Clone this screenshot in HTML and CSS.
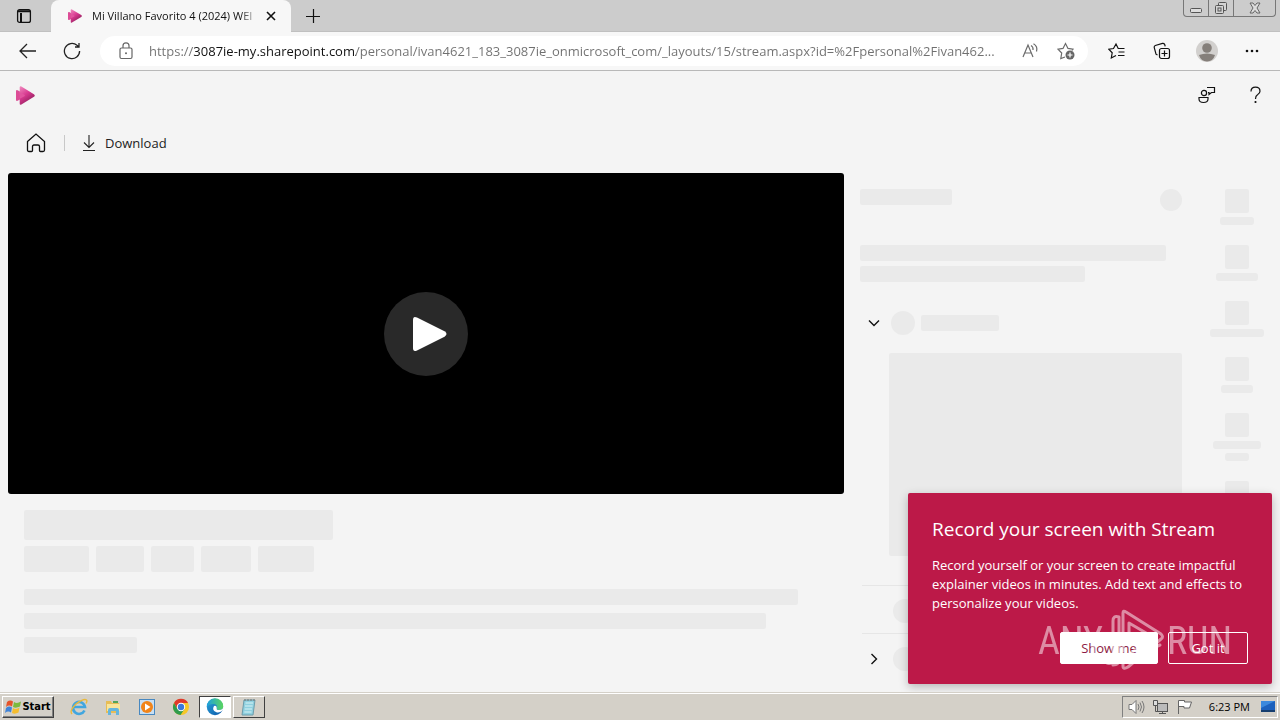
FILE: index.html
```html
<!DOCTYPE html>
<html lang="en">
<head>
<meta charset="utf-8">
<meta name="viewport" content="width=device-width, initial-scale=1">
<title>Mi Villano Favorito 4 (2024)</title>
<link rel="stylesheet" href="styles.css">
</head>
<body>
<svg class="defs" aria-hidden="true">
  <defs>
    <linearGradient id="pink" x1="0" y1="0" x2="0.6" y2="1"><stop offset="0" stop-color="#f08cc0"/><stop offset="0.5" stop-color="#d83a90"/><stop offset="1" stop-color="#8c1d58"/></linearGradient>
    <linearGradient id="edge" x1="0" y1="0" x2="1" y2="1"><stop offset="0" stop-color="#2ba5d9"/><stop offset="1" stop-color="#0b56a8"/></linearGradient>
    <linearGradient id="edgetop" x1="0" y1="0" x2="1" y2="0"><stop offset="0" stop-color="#1d9fe0"/><stop offset="1" stop-color="#5bd65c"/></linearGradient>
    <symbol id="stream" viewBox="0 0 18 18"><path d="M0 5Q0 3.500 1.500 4L9 8Q10.500 9 9 10L1.500 14Q0 14.500 0 13Z" fill="#dc4c96"/><path d="M3.500 1.500Q3.500-.3 5.100 .500L17 7.700Q18.600 9 17 10.300L5.100 17.500Q3.500 18.300 3.500 16.500Z" fill="url(#pink)"/><path d="M3.500 6L8 8.300Q9 9 8 9.700L3.500 12Z" fill="#e0559f"/></symbol>
  </defs>
</svg>

<header class="tabstrip">
  <button class="tab-actions" aria-label="Tab actions"><svg width="16" height="16" viewBox="0 0 16 16" fill="none" stroke="#111" stroke-width="1.300"><rect x="1.600" y="1.600" width="12.800" height="12.800" rx="2"/><path d="M2 3.200H14M5 5V14" stroke-width="2"/></svg></button>
  <div class="tab">
    <svg width="14" height="14"><use href="#stream"/></svg>
    <span class="tab-title">Mi Villano Favorito 4 (2024) WEI</span>
    <button class="tab-close" aria-label="Close tab"><svg width="10" height="10" viewBox="0 0 10 10" stroke="#111" stroke-width="1.600"><path d="M1 1L9 9M9 1L1 9"/></svg></button>
  </div>
  <button class="new-tab" aria-label="New tab"><svg width="14" height="14" viewBox="0 0 14 14" stroke="#111" stroke-width="1.200"><path d="M0 7.500H14M7.500 0V14"/></svg></button>
  <div class="window-buttons">
    <button class="win" aria-label="Minimize"><svg width="12" height="14" viewBox="0 0 12 14" fill="#ddd" stroke="#555"><rect x=".5" y="7.500" width="11" height="4" rx="1"/></svg></button>
    <button class="win" aria-label="Restore"><svg width="14" height="14" viewBox="0 0 14 14" fill="#d4d4d4" stroke="#555"><rect x="4.500" y="1.500" width="8" height="8" rx="1"/><rect x="1.500" y="4.500" width="8" height="8" rx="1"/><rect x="4" y="7" width="3" height="3"/></svg></button>
    <button class="win wide" aria-label="Close"><svg width="12" height="12" viewBox="0 0 12 12" fill="#ddd" stroke="#666"><path d="M1 1H4L6 3.500L8 1H11L8 6L11 11H8L6 8.500L4 11H1L4 6Z"/></svg></button>
  </div>
</header>

<nav class="toolbar" aria-label="Browser">
  <button class="tool" aria-label="Back"><svg width="18" height="16" viewBox="0 0 18 16" fill="none" stroke="#222" stroke-width="1.300"><path d="M8 1L1 8L8 15M1 8H17"/></svg></button>
  <button class="tool" aria-label="Refresh"><svg width="18" height="18" viewBox="0 0 18 18" fill="none" stroke="#222" stroke-width="1.300"><path d="M16.600 9A7.600 7.600 0 1 1 14 3.300L15.500 4.500M16 1V5H12"/></svg></button>
  <div class="address">
    <svg width="14" height="18" viewBox="0 0 14 18" fill="none" stroke="#666" stroke-width="1.200"><rect x="1" y="6" width="12" height="10.500" rx="1.500"/><path d="M4 6V3.800A3 3 0 0 1 10 3.800V6"/><circle cx="7" cy="11.300" r="1" fill="#666" stroke="none"/></svg>
    <input class="url" type="text" aria-label="Address" value="https://3087ie-my.sharepoint.com/personal/ivan4621_183_3087ie_onmicrosoft_com/_layouts/15/stream.aspx?id=%2Fpersonal%2Fivan462...">
    <button class="addr-btn" aria-label="Read aloud"><svg width="17" height="16" viewBox="0 0 17 16" fill="none" stroke="#6b6b6b" stroke-width="1.200"><path d="M1 14L6 2L11 14M2.800 10H9.200M9 2.500Q11.500 4 11 7M11.500 .8Q16 3.500 14.500 8.500"/></svg></button>
    <button class="addr-btn" aria-label="Add to favorites"><svg width="18" height="18" viewBox="0 0 18 18" fill="none" stroke="#6b6b6b" stroke-width="1.200"><path d="M8 15L3.800 16.500L4.700 11L1 7.200L6 6.400L8.500 1.500L11 6.400L16 7.200L15 8.500"/><circle cx="13" cy="13" r="4.500" fill="#666" stroke="none"/><path d="M10.500 13H15.500M13 10.500V15.500" stroke="#fff"/></svg></button>
  </div>
  <div class="tools-end">
    <button class="tool" aria-label="Favorites"><svg width="18" height="18" viewBox="0 0 18 18" fill="none" stroke="#111" stroke-width="1.200"><path d="M8 13.500L3.300 16L4.200 10.800L.8 7.200L5.500 6.500L8 2L10.200 6.500H16.500M10.500 10H16.500M10 13.500H16.500"/></svg></button>
    <button class="tool" aria-label="Collections"><svg width="18" height="18" viewBox="0 0 18 18" fill="none" stroke="#111" stroke-width="1.200"><rect x="6.500" y="6.500" width="10" height="10" rx="2"/><path d="M11.500 8.500V14.500M8.500 11.500H14.500M4.500 13L3 12.200L1.200 5.500Q1 4 2.300 3.500L9.500 1.400Q11 1.200 11.700 2.500L12.200 4.300"/></svg></button>
    <button class="tool" aria-label="Profile"><svg width="22" height="22" viewBox="0 0 22 22"><circle cx="11" cy="11" r="11" fill="#d2d0ce"/><circle cx="11" cy="8" r="4.800" fill="#857f7a"/><path d="M3 15Q11 12 19 15Q17 21.500 11 21.500Q5 21.500 3 15Z" fill="#857f7a"/></svg></button>
    <button class="tool" aria-label="Settings and more"><svg width="14" height="4" viewBox="0 0 14 4" fill="#111"><circle cx="2" cy="2" r="1.300"/><circle cx="7" cy="2" r="1.300"/><circle cx="12" cy="2" r="1.300"/></svg></button>
  </div>
</nav>

<div class="app">
  <header class="suite">
    <svg width="19" height="19"><use href="#stream"/></svg>
    <div class="suite-actions">
      <button class="tool" aria-label="Feedback"><svg width="18" height="18" viewBox="0 0 18 18" fill="none" stroke="#111" stroke-width="1.200"><circle cx="6" cy="7" r="2.600"/><path d="M1 11.500H10V13Q10 16.500 5.500 16.500Q1 16.500 1 13ZM9 1.500H16.500V6.500H13.500L11 8.500V6.500H10"/></svg></button>
      <button class="tool" aria-label="Help"><svg width="11" height="18" viewBox="0 0 11 18" fill="none" stroke="#111" stroke-width="1.200"><path d="M1 5.500Q1 1.200 5.500 1.200Q10 1.200 10 5.200Q10 7.200 7.500 8.800Q5.500 10 5.500 13"/><circle cx="5.500" cy="16" r=".5" fill="#111"/></svg></button>
    </div>
  </header>

  <nav class="commands" aria-label="Commands">
    <button class="home" aria-label="Home"><svg width="20" height="20" viewBox="0 0 20 20" fill="none" stroke="#111" stroke-width="1.300"><path d="M1.500 8.500L10 1L18.500 8.500V17Q18.500 18.500 17 18.500H14.500Q13.500 18.500 13.500 17.500V13.500Q13.500 12 12 12H8Q6.500 12 6.500 13.500V17.500Q6.500 18.500 5.500 18.500H3Q1.500 18.500 1.500 17Z"/></svg></button>
    <span class="separator"></span>
    <button class="download"><svg width="14" height="18" viewBox="0 0 14 18" fill="none" stroke="#222" stroke-width="1.100"><path d="M7 1V13.500M2 8.500L7 13.500L12 8.500M1 16.500H13"/></svg>Download</button>
  </nav>

  <main class="content">
    <section class="watch">
      <div class="video"><button class="play" aria-label="Play"><svg width="36" height="38" viewBox="0 0 36 38"><path d="M1 5Q1 .8 5 2.600L32.500 16.300Q36.500 19 32.500 21.700L5 35.400Q1 37.200 1 33Z" fill="#fff"/></svg></button></div>
      <div class="details">
        <div class="bone headline"></div>
        <div class="chips"><i class="bone chip-a"></i><i class="bone chip-b"></i><i class="bone chip-c"></i><i class="bone chip-d"></i><i class="bone chip-e"></i></div>
        <div class="bone line full"></div>
        <div class="bone line long"></div>
        <div class="bone line short"></div>
      </div>
    </section>

    <aside class="panel">
      <div class="panel-head"><i class="bone panel-title"></i><i class="bone dot"></i></div>
      <div class="bone text-a"></div>
      <div class="bone text-b"></div>
      <div class="group open">
        <button class="chevron" aria-label="Collapse section"><svg width="12" height="8" viewBox="0 0 12 8" fill="none" stroke="#111" stroke-width="1.400"><path d="M1 1.500L6 6.500L11 1.500"/></svg></button>
        <i class="bone round"></i><i class="bone group-name"></i>
      </div>
      <div class="bone preview"></div>
      <div class="group row"><span class="chevron"></span><i class="bone round"></i></div>
      <div class="group row"><button class="chevron" aria-label="Expand section"><svg width="8" height="12" viewBox="0 0 8 12" fill="none" stroke="#111" stroke-width="1.400"><path d="M1.500 1L6.500 6L1.500 11"/></svg></button><i class="bone round"></i></div>
    </aside>

    <aside class="rail">
      <div class="rail-item"><i class="bone tile"></i><i class="bone label w34"></i></div>
      <div class="rail-item"><i class="bone tile"></i><i class="bone label w42"></i></div>
      <div class="rail-item"><i class="bone tile"></i><i class="bone label w54"></i></div>
      <div class="rail-item"><i class="bone tile"></i><i class="bone label w32"></i></div>
      <div class="rail-item"><i class="bone tile"></i><i class="bone label w48"></i><i class="bone label w24"></i></div>
      <div class="rail-item"><i class="bone tile"></i><i class="bone label w34"></i></div>
    </aside>
  </main>

  <div class="callout" role="dialog" aria-labelledby="callout-title">
    <h2 id="callout-title">Record your screen with Stream</h2>
    <p>Record yourself or your screen to create impactful explainer videos in minutes. Add text and effects to personalize your videos.</p>
    <div class="callout-actions"><button class="primary">Show me</button><button class="secondary">Got it</button></div>
  </div>

  <div class="watermark">
    <span>ANY</span>
    <svg width="60" height="64" viewBox="0 0 60 64" fill="none" stroke="#fff" stroke-width="3" stroke-linejoin="round" stroke-linecap="round"><path d="M14 8Q8 6 8 12V50Q8 56 2 54M14 8V50Q14 56 8 56"/><path d="M18 42V4Q18 1 21 3L56 25Q59 28 56 30L23 58Q18 61 18 57V50L48 28L24 14V36"/><path d="M20 51L55 36"/></svg>
    <span>RUN</span>
  </div>
</div>

<footer class="taskbar">
  <button class="start"><svg width="17" height="16" viewBox="0 0 17 16"><path d="M2 3Q5 .5 8 2.500L7 7.500Q4 5.500 1 8Z" fill="#e5532a"/><path d="M9 3Q12 5 16 2.500L15 7.500Q11 9.500 8 8Z" fill="#7cba3d"/><path d="M1 9Q4 6.500 7 8.500L6 13.500Q3 11.500 0 14Z" fill="#3f83d8"/><path d="M8 9Q11 11 14.500 8.500L13.500 13.500Q10 15.500 7 14Z" fill="#f5bd2e"/></svg>Start</button>
  <div class="quick">
    <button class="task" aria-label="Internet Explorer"><svg width="18" height="18" viewBox="0 0 18 18" fill="none"><path d="M14.500 12.500A6 6 0 1 1 15 9H4" stroke="#41a6df" stroke-width="2.600"/><path d="M2 16Q-1 13 6 6Q14 0 16.500 2Q17.500 3 16 5.500" stroke="#e9b93c" stroke-width="1.400"/></svg></button>
    <button class="task" aria-label="File Explorer"><svg width="18" height="18" viewBox="0 0 18 18"><path d="M2 3H7L8 5H15V15H2Z" fill="#e7bd56"/><path d="M3 6H16V13H3Z" fill="#f9e59b"/><path d="M4 17V12Q4 10 6 10H13Q15 10 15 12V17H12V13H7V17Z" fill="#65b5dd"/><path d="M9 4H14" stroke="#54a55a" stroke-width="2"/></svg></button>
    <button class="task" aria-label="Media Player"><svg width="18" height="18" viewBox="0 0 18 18"><rect x="1.500" y="1.500" width="15" height="15" fill="#c8dff3" stroke="#4888c0"/><circle cx="9" cy="9" r="6" fill="#f18419"/><path d="M7 5.500L12.500 9L7 12.500Z" fill="#fff"/></svg></button>
    <button class="task" aria-label="Chrome"><svg width="18" height="18" viewBox="0 0 18 18"><circle cx="9" cy="9" r="8" fill="#f6c728"/><path d="M2 5A8 8 0 0 1 16 5H9L5.500 11Z" fill="#df382c"/><path d="M2 5A8 8 0 0 0 8.500 17L12.500 11H5.500Z" fill="#2f9b4d"/><circle cx="9" cy="9" r="4.200" fill="#fff"/><circle cx="9" cy="9" r="3.200" fill="#3978dc"/></svg></button>
    <button class="task pressed" aria-label="Edge"><svg width="18" height="18" viewBox="0 0 18 18"><circle cx="9" cy="9" r="8.200" fill="url(#edge)"/><path d="M.8 9A8.200 8.200 0 0 1 17.200 8Q17.500 12 13 12Q10 12 10.800 10Q11.500 6 7.500 6Q3 6 .8 9Z" fill="url(#edgetop)"/><path d="M8 8Q5.500 12 10 14Q13 15.500 16.500 12.500L18 10V8Q17 12 13 12Q10 12 10.800 10Q10.500 7 8 8Z" fill="#fff"/></svg></button>
    <button class="task raised" aria-label="Notepad"><svg width="18" height="18" viewBox="0 0 18 18"><path d="M4 2H15L13 17H2Z" fill="#8fd0df" stroke="#6d9cab"/><path d="M5.500 5H13M5 8H12.600M4.700 11H12M4.300 14H11.500" stroke="#d9f3f6"/><path d="M5 1V3M8 1V3M11 1V3M14 1V3" stroke="#777"/></svg></button>
  </div>
  <div class="tray">
    <svg width="18" height="16" viewBox="0 0 18 16" fill="#fff" stroke="#777"><path d="M1 5.500H4L8 1.500V14.500L4 10.500H1Z"/><path d="M10 5Q12 8 10 11M12 3.500Q15 8 12 12.500M14 2Q18 8 14 14" fill="none"/></svg>
    <svg width="18" height="16" viewBox="0 0 18 16" fill="#ddd" stroke="#555"><path d="M3.500 6V12.500H8" fill="none"/><rect x="5.500" y="4.500" width="10" height="8" fill="#bbb"/><path d="M7 14.500H14M10.500 12V14M1.500 1.500H5.500V6.500H1.500Z"/></svg>
    <svg width="18" height="16" viewBox="0 0 18 16" fill="#fff" stroke="#666"><path d="M2.500 15V1.500H8.500V3H15.500L13.500 9H8V7.500H3"/></svg>
    <time class="clock">6:23 PM</time>
    <svg width="16" height="16" viewBox="0 0 16 16"><path d="M1 2H15V11H1Z" fill="#1c61bd"/><path d="M1 2H15L1 9Z" fill="#3b89dd"/><path d="M1 11H15V13H1Z" fill="#163e6f"/></svg>
  </div>
</footer>
</body>
</html>
```

FILE: styles.css
```css
* { box-sizing: border-box; }
html, body { height: 100%; }
body { margin: 0; display: flex; flex-direction: column; overflow: hidden; background: #f4f4f4; color: #222; font: 13px/20px "Open Sans", "Noto Sans", sans-serif; }
button { margin: 0; padding: 0; border: 0; background: none; color: inherit; font: inherit; display: flex; align-items: center; justify-content: center; }
svg { display: block; flex: none; }
.defs { position: absolute; width: 0; height: 0; }

.tabstrip { flex: none; height: 32px; display: flex; align-items: flex-start; background: #ccc; border-bottom: 1px solid #c0c0c0; }
.tab-actions { width: 48px; height: 32px; }
.tab { width: 240px; height: 32px; margin-left: 3px; padding: 0 14px 0 17px; display: flex; align-items: center; background: #f7f7f7; border-radius: 8px 8px 0 0; color: #111; font-size: 11px; }
.tab-title { flex: 1; min-width: 0; margin: 0 5px 0 10px; overflow: hidden; white-space: nowrap; -webkit-mask-image: linear-gradient(to right, #000 88%, transparent); mask-image: linear-gradient(to right, #000 88%, transparent); }
.tab-close { width: 12px; height: 20px; }
.new-tab { width: 44px; height: 31px; }
.window-buttons { margin-left: auto; margin-right: 4px; height: 17px; display: flex; border: 1px solid #777; border-top: 0; border-radius: 0 0 4px 4px; }
.win { width: 25px; height: 16px; border-right: 1px solid #777; }
.win.wide { width: 41px; border-right: 0; }

.toolbar { flex: none; height: 39px; padding: 0 6px; display: flex; align-items: center; background: #f7f7f7; border-bottom: 1px solid #b8b8b8; }
.tool { width: 44px; height: 32px; }
.tools-end { display: flex; }
.tools-end .tool { width: 45px; }
.address { flex: 1; min-width: 0; height: 30px; margin: 0 6px; padding: 0 4px 0 19px; display: flex; align-items: center; gap: 16px; background: #fff; border-radius: 15px; }
.url { flex: 1; min-width: 0; height: 24px; padding: 0; border: 0; outline: 0; font: inherit; font-size: 13px; color: transparent; background: linear-gradient(to right, #707070 45px, #111 45px, #111 207px, #707070 207px); -webkit-background-clip: text; background-clip: text; }
.addr-btn { width: 36px; height: 30px; margin-left: -16px; }

.app { flex: 1; min-height: 0; position: relative; overflow: hidden; display: flex; flex-direction: column; background: #f4f4f4; }
.suite { flex: none; height: 48px; padding: 0 3px 0 16px; display: flex; align-items: center; justify-content: space-between; }
.suite-actions { display: flex; gap: 4px; }
.commands { flex: none; height: 48px; padding-left: 20px; display: flex; align-items: center; }
.home { width: 32px; height: 32px; margin-right: 12px; }
.separator { width: 1px; height: 16px; margin-right: 17px; background: #c8c8c8; }
.download { gap: 9px; height: 32px; }

.content { flex: 1; min-height: 0; padding: 6px 8px 0; display: grid; grid-template-columns: minmax(0, 1fr) 322px 90px; column-gap: 0; }
.watch { min-width: 0; margin-right: 16px; }
.video { height: 321px; display: flex; align-items: center; justify-content: center; background: #000; border-radius: 3px; }
.play { width: 84px; height: 84px; padding-left: 8px; border-radius: 50%; background: #292929; }
.bone { display: block; flex: none; background: #eaeaea; border-radius: 2px; }
.details { padding: 16px 14px 0 16px; }
.headline { width: 309px; height: 30px; }
.chips { display: flex; gap: 7px; margin: 6px 0 17px; }
.chips .bone { height: 26px; }
.chip-a { width: 65px; }
.chip-b { width: 48px; }
.chip-c { width: 43px; }
.chip-d { width: 50px; }
.chip-e { width: 56px; }
.line { height: 16px; margin-bottom: 8px; }
.line.full { width: 96%; }
.line.long { width: 92%; }
.line.short { width: 14%; }

.panel { padding-top: 16px; }
.panel-head { display: flex; justify-content: space-between; height: 56px; }
.panel-title { width: 92px; height: 16px; }
.dot { width: 22px; height: 22px; border-radius: 50%; }
.text-a { width: 306px; height: 16px; margin-bottom: 5px; }
.text-b { width: 225px; height: 16px; margin-bottom: 29px; }
.group { display: flex; align-items: center; height: 24px; }
.chevron { width: 28px; height: 24px; margin-right: 3px; }
.round { width: 24px; height: 24px; border-radius: 50%; }
.group-name { width: 78px; height: 16px; margin-left: 6px; }
.preview { height: 203px; margin: 18px 0 29px 29px; }
.row { height: 48px; margin-left: 2px; padding-top: 2px; border-top: 1px solid #e6e6e6; }
.row .chevron { margin-left: -2px; margin-right: 5px; }

.rail { margin-left: 20px; padding-right: 1px; padding-top: 16px; overflow: hidden; }
.rail-item { display: flex; flex-direction: column; align-items: center; gap: 4px; margin-bottom: 20px; }
.tile { width: 24px; height: 24px; }
.label { height: 8px; border-radius: 3px; }
.w24 { width: 24px; }
.w32 { width: 32px; }
.w34 { width: 34px; }
.w42 { width: 42px; }
.w48 { width: 48px; }
.w54 { width: 54px; }

.callout { position: absolute; right: 8px; bottom: 8px; width: 364px; padding: 24px 24px 20px; background: #bc1948; color: #fff; border-radius: 2px; box-shadow: 0 3px 10px rgba(0, 0, 0, .25); }
.callout h2 { margin: 0 0 15px; font-size: 19px; line-height: 24px; font-weight: 400; }
.callout p { margin: 0 0 19px; line-height: 19px; }
.callout-actions { display: flex; justify-content: flex-end; gap: 10px; }
.callout-actions button { height: 32px; border: 1px solid #fff; border-radius: 2px; }
.primary { width: 98px; background: #fff; color: #8c1b43; }
.secondary { width: 80px; }

.watermark { position: absolute; right: 48px; bottom: 19px; display: flex; align-items: center; gap: 2px; color: #fff; opacity: .5; font: 400 38px/40px "Roboto Condensed", "Open Sans Condensed", "Liberation Sans Narrow", Roboto, sans-serif; pointer-events: none; }

.taskbar { flex: none; height: 28px; padding: 2px 2px 1px; display: flex; align-items: center; background: #d4d0c8; border-top: 1px solid #d4d0c8; box-shadow: inset 0 1px #fff; color: #000; }
.start { width: 52px; height: 22px; border: 1px solid; border-color: #fff #404040 #404040 #fff; box-shadow: inset -1px -1px #808080; font: 700 11px/14px "DejaVu Sans Condensed", "Open Sans", sans-serif; }
.quick { display: flex; gap: 2px; margin-left: 9px; }
.task { width: 32px; height: 22px; }
.pressed { background: #fff; border: 1px solid; border-color: #404040 #fff #fff #404040; }
.raised { border: 1px solid; border-color: #fff #404040 #404040 #fff; }
.tray { margin-left: auto; height: 22px; padding: 0 1px 0 5px; display: flex; align-items: center; gap: 6px; border: 1px solid; border-color: #808080 #fff #fff #808080; }
.clock { margin: 0 4px 0 9px; font: 11px/14px "Open Sans", sans-serif; white-space: nowrap; }
```
